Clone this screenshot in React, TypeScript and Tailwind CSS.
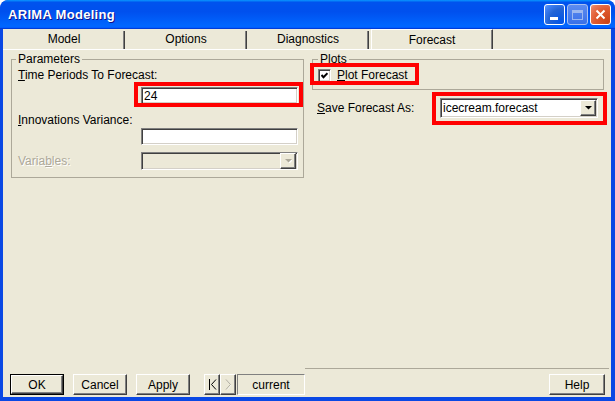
import React from "react";

const sunken =
  "border border-t-[#808080] border-l-[#808080] border-b-white border-r-white shadow-[inset_1px_1px_0_#404040,inset_-1px_-1px_0_#D4D0C8]";
const raised =
  "bg-[#ECE9D8] border border-t-white border-l-white border-b-[#404040] border-r-[#404040] shadow-[inset_-1px_-1px_0_#808080]";

function DropArrow({ disabled }: { disabled?: boolean }) {
  return (
    <div className={`${raised} w-[16px] h-[16px] flex items-center justify-center`}>
      <svg width="7" height="4" viewBox="0 0 7 4">
        {disabled ? (
          <>
            <path d="M1 1h7L4.5 4.5z" fill="#fff" />
            <path d="M0 0h7L3.5 3.5z" fill="#ACA899" />
          </>
        ) : (
          <path d="M0 0h7L3.5 3.5z" fill="#000" />
        )}
      </svg>
    </div>
  );
}

function Btn({ label, def }: { label: string; def?: boolean }) {
  if (def) {
    return (
      <div className="w-[54px] h-[21px] border border-black flex">
        <div className={`${raised} flex-1 flex items-center justify-center text-[12px] leading-none`}>
          {label}
        </div>
      </div>
    );
  }
  return (
    <div className={`${raised} w-[54px] h-[21px] flex items-center justify-center text-[12px] leading-none`}>
      {label}
    </div>
  );
}

function Tab({ label, selected }: { label: string; selected?: boolean }) {
  if (selected) {
    return (
      <div className="ml-[2px] w-[122px] h-full border-t border-l border-t-white border-l-white border-r border-r-[#404040] shadow-[inset_-1px_0_0_#808080] flex items-center justify-center text-[12px]">
        {label}
      </div>
    );
  }
  return (
    <div className="w-[122px] h-full flex items-center justify-center text-[12px] relative">
      {label}
      <div className="absolute right-0 top-[2px] bottom-0 w-[2px] border-r border-r-[#404040] bg-[#808080]" />
    </div>
  );
}

export default function App() {
  return (
    <div className="w-[615px] h-[401px] bg-[#0A48E4] rounded-t-[8px] flex flex-col font-['Liberation_Sans',Arial,sans-serif] text-black overflow-hidden">
      {/* Title bar */}
      <div className="h-[29px] shrink-0 rounded-t-[8px] bg-[linear-gradient(to_bottom,#0997ff,#0053ee_8%,#0050ee_40%,#06f_88%,#06f_93%,#005bff_95%,#003dd7_96%,#003dd7)] flex items-center pl-[8px] pr-[4px]">
        <span className="text-white font-bold text-[13px] tracking-[0.3px] [text-shadow:1px_1px_#0F1089]">
          ARIMA Modeling
        </span>
        <div className="ml-auto flex gap-[2px]">
          <div className="w-[21px] h-[21px] rounded-[3px] border border-white bg-[radial-gradient(circle_at_90%_90%,#0054E9_0%,#2263D5_55%,#4282F5_85%,#6A9EF8_100%)] relative">
            <div className="absolute left-[5px] bottom-[4px] w-[8px] h-[3px] bg-white" />
          </div>
          <div className="w-[21px] h-[21px] rounded-[3px] border border-[#A8C0F0] bg-[linear-gradient(to_bottom,#5C8CF0,#3A70E8)] flex items-center justify-center">
            <div className="w-[11px] h-[10px] border border-[#9CB8F0] border-t-[3px]" />
          </div>
          <div className="w-[21px] h-[21px] rounded-[3px] border border-white bg-[radial-gradient(circle_at_90%_90%,#CC4418_0%,#E05A30_55%,#EA7A58_85%,#F0A080_100%)] flex items-center justify-center">
            <svg width="11" height="11" viewBox="0 0 11 11">
              <path d="M1.5 1.5L9.5 9.5M9.5 1.5L1.5 9.5" stroke="#fff" strokeWidth="2" />
            </svg>
          </div>
        </div>
      </div>

      {/* Body */}
      <div className="flex-1 ml-[3px] mr-[4px] mb-[4px] bg-[#ECE9D8] flex flex-col text-[12px]">
        {/* Tabs */}
        <div className="h-[20px] flex shrink-0">
          <Tab label="Model" />
          <Tab label="Options" />
          <Tab label="Diagnostics" />
          <Tab label="Forecast" selected />
        </div>
        <div className="h-px bg-white shrink-0" />

        {/* Main */}
        <div className="flex-1 flex pt-[2px]">
          <fieldset className="ml-[8px] w-[293px] self-start border border-[#ACA899] pl-[6px] pr-[5px] pb-[7px] flex flex-col">
            <legend className="px-[2px] -ml-[2px] leading-[14px]">Parameters</legend>
            <div className="mt-[2px] leading-[14px]">
              <u>T</u>ime Periods To Forecast:
            </div>
            <div className="mt-[5px] self-end w-[157px] h-[17px] relative">
              <div className={`${sunken} bg-white w-full h-full flex items-center pl-[2px] leading-none`}>24</div>
              <div className="absolute -left-[7px] -top-[5px] -right-[5px] -bottom-[3px] border-4 border-[#FF0000]" />
            </div>
            <div className="mt-[9px] leading-[14px]">
              <u>I</u>nnovations Variance:
            </div>
            <div className={`${sunken} mt-[1px] self-end bg-white w-[157px] h-[17px]`} />
            <div className="mt-[7px] flex items-center justify-between">
              <span className="text-[#ACA899] [text-shadow:1px_1px_0_#fff]">
                Varia<u>b</u>les:
              </span>
              <div className={`${sunken} w-[157px] h-[18px] flex items-center justify-end pr-px`}>
                <DropArrow disabled />
              </div>
            </div>
          </fieldset>

          <div className="ml-[8px] w-[292px] flex flex-col">
            <fieldset className="border border-[#ACA899] pl-[5px] pr-[5px] pb-[5px]">
              <legend className="px-[2px] leading-[14px]">Plots</legend>
              <div className="h-[18px] flex items-center">
                <div className="relative flex items-center h-full">
                  <div className={`${sunken} bg-white w-[13px] h-[13px] flex items-center justify-center`}>
                    <svg width="7" height="7" viewBox="0 0 7 7">
                      <path d="M0.5 3L2.5 5.2L6.5 1.2" stroke="#000" strokeWidth="2" fill="none" />
                    </svg>
                  </div>
                  <span className="ml-[6px] leading-[14px]">
                    <u>P</u>lot Forecast
                  </span>
                  <div className="absolute -left-[8px] -top-[3px] -right-[11px] -bottom-[1px] border-4 border-[#FF0000]" />
                </div>
              </div>
            </fieldset>
            <div className="mt-[8px] pl-[5px] flex items-center">
              <span className="w-[123px]">
                <u>S</u>ave Forecast As:
              </span>
              <div className="relative w-[158px] h-[20px]">
                <div className={`${sunken} bg-white w-full h-full flex items-center pl-[2px] pr-[1px]`}>
                  <span className="flex-1">icecream.forecast</span>
                  <DropArrow />
                </div>
                <div className="absolute -left-[8px] -top-[6px] -right-[9px] -bottom-[7px] border-4 border-[#FF0000]" />
              </div>
            </div>
          </div>
        </div>

        {/* Bottom bar */}
        <div className="shrink-0 flex">
          <div className="ml-[302px] w-[304px] h-px bg-[#ACA899]" />
        </div>
        <div className="shrink-0 pt-[5px] pb-[2px] flex items-center">
          <div className="ml-[7px] flex gap-[9px]">
            <Btn label="OK" def />
            <Btn label="Cancel" />
            <Btn label="Apply" />
          </div>
          <div className="ml-[14px] flex h-[21px]">
            <div className={`${raised} w-[16px] h-full flex items-center justify-center`}>
              <svg width="9" height="11" viewBox="0 0 9 11">
                <path d="M1.5 0v11" stroke="#000" strokeWidth="1" />
                <path d="M8 0.5L3.5 5.5L8 10.5" stroke="#000" strokeWidth="1" fill="none" />
              </svg>
            </div>
            <div className={`${raised} w-[16px] h-full flex items-center justify-center`}>
              <svg width="7" height="11" viewBox="0 0 7 11">
                <path d="M2 1.5L6 6L2 10.5" stroke="#fff" strokeWidth="1" fill="none" />
                <path d="M1 0.5L5.5 5.5L1 10.5" stroke="#ACA899" strokeWidth="1" fill="none" />
              </svg>
            </div>
            <div className="ml-px w-[68px] h-full border border-t-[#808080] border-l-[#808080] border-b-white border-r-white flex items-center justify-center">
              current
            </div>
          </div>
          <div className="ml-auto mr-[6px]">
            <div className={`${raised} w-[56px] h-[21px] flex items-center justify-center leading-none`}>Help</div>
          </div>
        </div>
      </div>
    </div>
  );
}
